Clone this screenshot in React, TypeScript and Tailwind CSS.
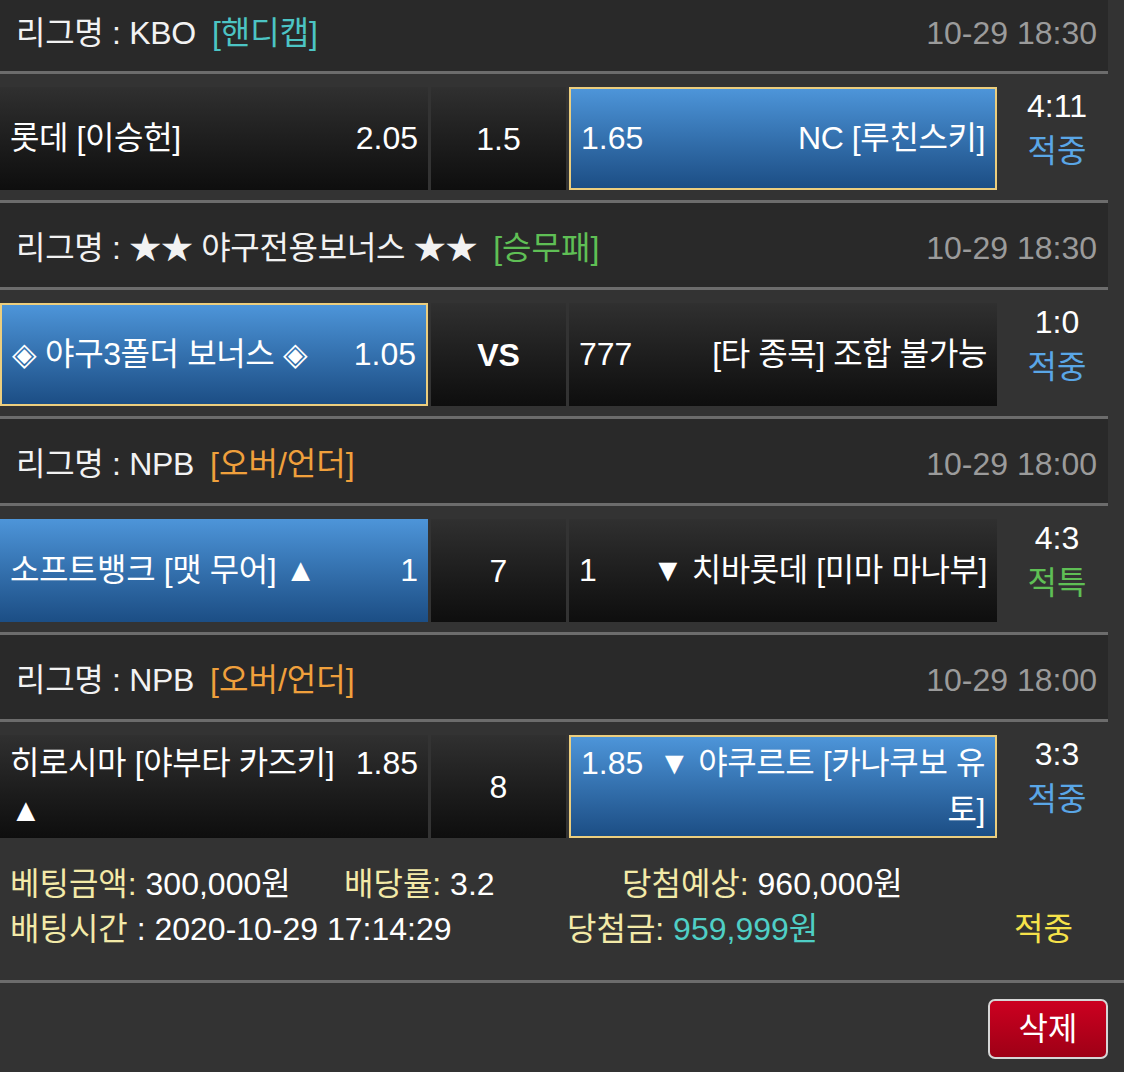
import React from "react";

type Kind = "dark" | "blue" | "picked";

interface Side {
  name: string;
  odds: string;
  kind: Kind;
}

interface Game {
  league: string;
  tag: string;
  tagColor: string;
  time: string;
  home: Side;
  mid: string;
  midBold?: boolean;
  away: Side;
  score: string;
  result: string;
  resultColor: string;
}

const games: Game[] = [
  {
    league: "KBO",
    tag: "[핸디캡]",
    tagColor: "text-[#4cc4c4]",
    time: "10-29 18:30",
    home: { name: "롯데 [이승헌]", odds: "2.05", kind: "dark" },
    mid: "1.5",
    away: { name: "NC [루친스키]", odds: "1.65", kind: "picked" },
    score: "4:11",
    result: "적중",
    resultColor: "text-[#5aa6e6]",
  },
  {
    league: "★★ 야구전용보너스 ★★",
    tag: "[승무패]",
    tagColor: "text-[#5fbf55]",
    time: "10-29 18:30",
    home: { name: "◈ 야구3폴더 보너스 ◈", odds: "1.05", kind: "picked" },
    mid: "VS",
    midBold: true,
    away: { name: "[타 종목] 조합 불가능", odds: "777", kind: "dark" },
    score: "1:0",
    result: "적중",
    resultColor: "text-[#5aa6e6]",
  },
  {
    league: "NPB",
    tag: "[오버/언더]",
    tagColor: "text-[#f0a03c]",
    time: "10-29 18:00",
    home: { name: "소프트뱅크 [맷 무어] ▲", odds: "1", kind: "blue" },
    mid: "7",
    away: { name: "▼ 치바롯데 [미마 마나부]", odds: "1", kind: "dark" },
    score: "4:3",
    result: "적특",
    resultColor: "text-[#5fbf55]",
  },
  {
    league: "NPB",
    tag: "[오버/언더]",
    tagColor: "text-[#f0a03c]",
    time: "10-29 18:00",
    home: { name: "히로시마 [야부타 카즈키] ▲", odds: "1.85", kind: "dark" },
    mid: "8",
    away: { name: "▼ 야쿠르트 [카나쿠보 유토]", odds: "1.85", kind: "picked" },
    score: "3:3",
    result: "적중",
    resultColor: "text-[#5aa6e6]",
  },
];

const darkGrad = "bg-linear-to-b from-[#303030] to-[#0e0e0e]";
const blueGrad = "bg-linear-to-b from-[#4d95d9] to-[#1c4e85]";

function cellBg(kind: Kind) {
  if (kind === "dark") return darkGrad;
  if (kind === "blue") return blueGrad;
  return `${blueGrad} border-2 border-[#ecce7e]`;
}

function TeamCell({ side, right }: { side: Side; right?: boolean }) {
  return (
    <div
      className={`w-[428px] h-[103px] shrink-0 flex items-center px-[10px] ${cellBg(side.kind)}`}
    >
      <div className={`w-full leading-[47px] ${right ? "text-right" : ""}`}>
        <span className={right ? "float-left mr-[8px]" : "float-right ml-[8px]"}>
          {side.odds}
        </span>
        <span className="tracking-[-0.4px]">{side.name}</span>
      </div>
    </div>
  );
}

function GameBlock({ g, first }: { g: Game; first?: boolean }) {
  return (
    <div>
      <div
        className={`w-[1108px] bg-[#292929] flex items-center justify-between pl-[16px] pr-[11px] ${
          first ? "h-[71px] pb-[5px]" : "h-[84px] pt-[5px]"
        }`}
      >
        <div className="text-[#f2f2f2]">
          <span className="tracking-[-0.3px]">리그명 : {g.league}</span>
          <span className={`ml-[16px] ${g.tagColor}`}>{g.tag}</span>
        </div>
        <div className="text-[#9b9b9b]">{g.time}</div>
      </div>
      <div className="w-[1108px] h-[3px] bg-[#6c6c6c]" />
      <div className="w-[1108px] h-[126px] flex items-start gap-[3px] pt-[13px] text-white">
        <TeamCell side={g.home} />
        <div
          className={`w-[135px] h-[103px] shrink-0 flex items-center justify-center ${darkGrad} ${
            g.midBold ? "font-bold" : ""
          }`}
        >
          {g.mid}
        </div>
        <TeamCell side={g.away} right />
        <div className="flex-1 flex flex-col items-center -mt-[3px] pl-[6px] leading-[45px]">
          <div>{g.score}</div>
          <div className={g.resultColor}>{g.result}</div>
        </div>
      </div>
    </div>
  );
}

export default function App() {
  return (
    <div className="min-h-[1072px] bg-[#333333] text-[32px] font-[family-name:'Liberation_Sans','Noto_Sans_CJK_KR',sans-serif] text-white">
      {games.map((g, i) => (
        <React.Fragment key={i}>
          {i > 0 && <div className="w-[1108px] h-[3px] bg-[#6c6c6c]" />}
          <GameBlock g={g} first={i === 0} />
        </React.Fragment>
      ))}

      <div className="px-[10px] pt-[14px] pb-[28px] leading-[45px]">
        <div className="flex">
          <span className="w-[334px]">
            <span className="text-[#f3eaa8]">베팅금액:</span> 300,000원
          </span>
          <span className="w-[278px]">
            <span className="text-[#f3eaa8]">배당률:</span> 3.2
          </span>
          <span>
            <span className="text-[#f3eaa8]">당첨예상:</span> 960,000원
          </span>
        </div>
        <div className="flex">
          <span className="w-[557px]">
            <span className="text-[#f3eaa8]">배팅시간</span> : 2020-10-29 17:14:29
          </span>
          <span className="w-[447px]">
            <span className="text-[#f3eaa8]">당첨금:</span>{" "}
            <span className="text-[#4fcfc6]">959,999원</span>
          </span>
          <span className="text-[#f6e24a]">적중</span>
        </div>
      </div>

      <div className="h-[3px] bg-[#6c6c6c]" />

      <div className="flex justify-end pt-[16px] pr-[16px]">
        <button
          type="button"
          className="w-[120px] h-[60px] rounded-[7px] border-2 border-[#d6d6d6] bg-linear-to-b from-[#cc0020] to-[#9e0016] text-white text-[32px] leading-none"
        >
          삭제
        </button>
      </div>
    </div>
  );
}
